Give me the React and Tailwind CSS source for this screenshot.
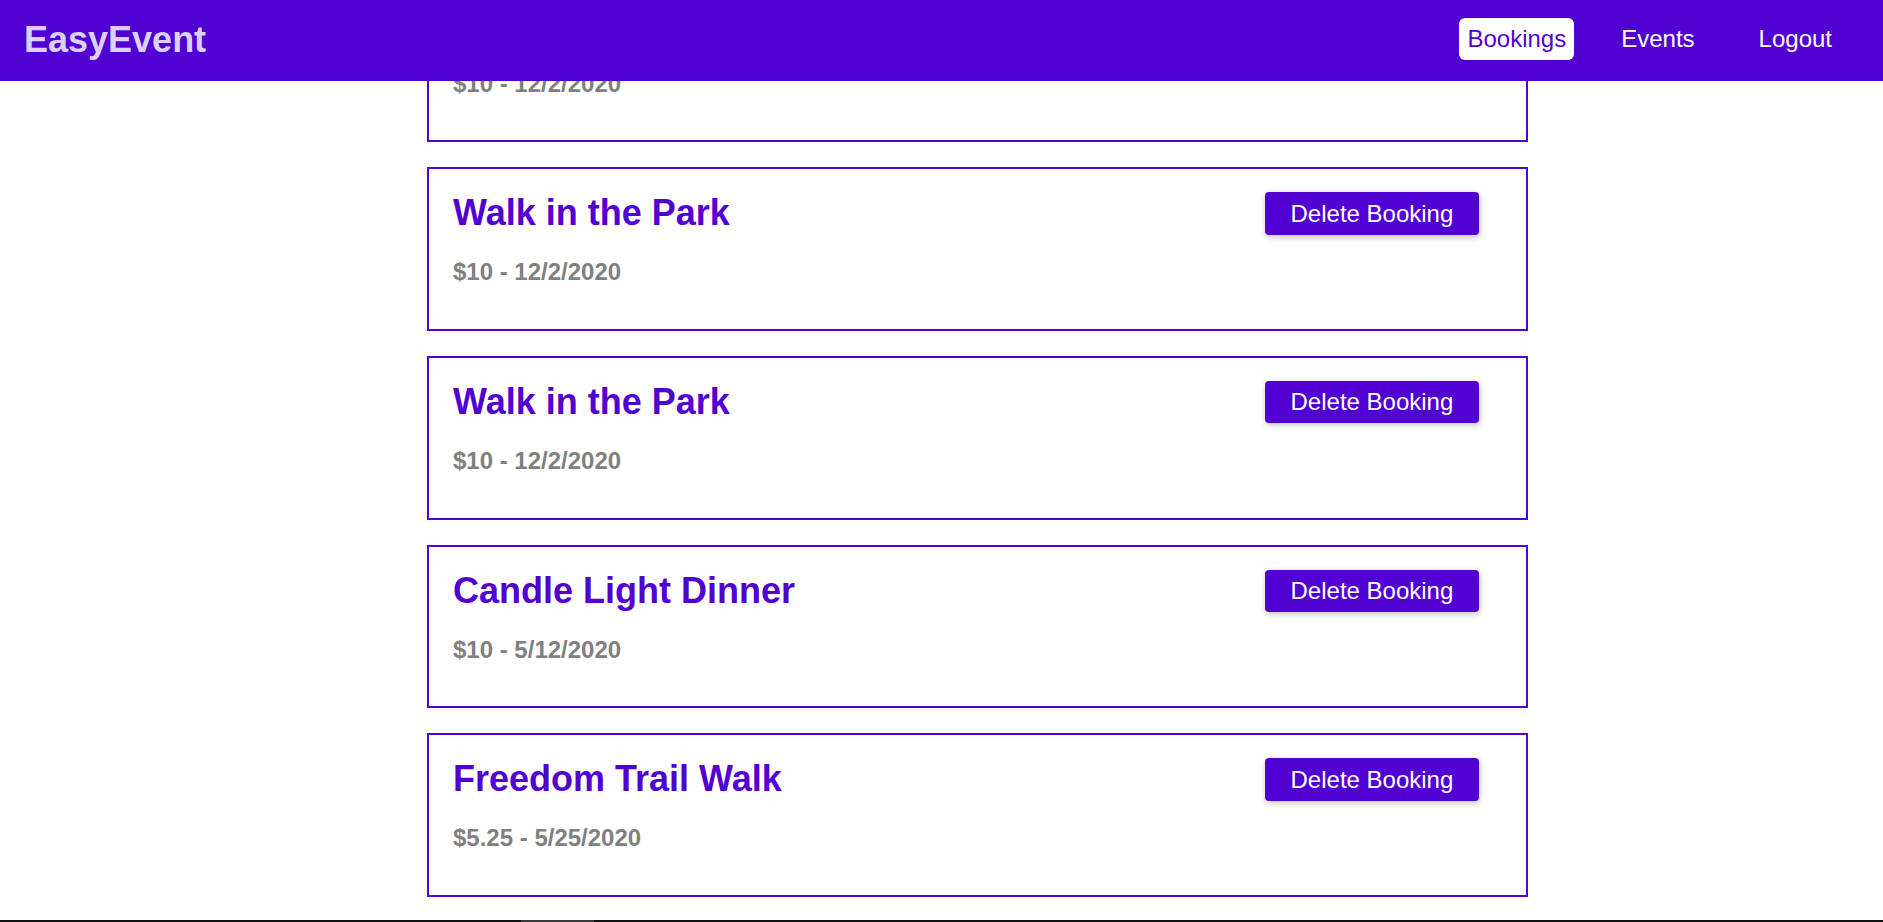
import React from "react";

const bookings = [
  { title: "Walk in the Park", sub: "$10 - 12/2/2020" },
  { title: "Walk in the Park", sub: "$10 - 12/2/2020" },
  { title: "Walk in the Park", sub: "$10 - 12/2/2020" },
  { title: "Candle Light Dinner", sub: "$10 - 5/12/2020" },
  { title: "Freedom Trail Walk", sub: "$5.25 - 5/25/2020" },
];

export default function App() {
  return (
    <div
      className="relative w-full h-[922px] overflow-hidden bg-white"
      style={{ fontFamily: '"Liberation Sans", Arial, sans-serif' }}
    >
      <header className="fixed top-0 left-0 right-0 z-10 h-[80.67px] bg-[#5101d1] flex items-center justify-between pl-[24px] pr-[43px]">
        <h1 className="text-[36px] leading-[1.15] font-bold text-[#dcd0ff] mb-[2px]">EasyEvent</h1>
        <nav className="self-start pt-[18px] flex items-center text-[24px] leading-[1.15]">
          <a className="px-[8px] py-[7px] rounded-[6px] bg-white text-[#5101d1]">Bookings</a>
          <a className="ml-[39px] px-[8px] py-[7px] text-white">Events</a>
          <button className="ml-[48px] px-[8px] py-[7px] text-white">Logout</button>
        </nav>
      </header>

      <main className="flex justify-center mt-[-21.5px]">
        <ul className="w-[1173px] pl-[72px] flex flex-col gap-[25px]">
          {bookings.map((b, i) => (
            <li
              key={i}
              className="border-2 border-[#5101d1] pt-[23px] pb-[43px] pl-[24px] pr-[24px] flex items-start justify-between"
            >
              <div>
                <h2 className="text-[36px] leading-[1.15] font-bold text-[#5101d1]">{b.title}</h2>
                <p className="mt-[24.7px] text-[24px] leading-[1.15] font-bold text-[#808080]">{b.sub}</p>
              </div>
              <button className="mr-[22.7px] px-[26px] py-[7.5px] text-[24px] leading-[1.15] text-white bg-[#5101d1] rounded-[4px] shadow-[1px_2px_6px_rgba(0,0,0,0.25)]">
                Delete Booking
              </button>
            </li>
          ))}
        </ul>
      </main>

      <div className="fixed bottom-0 left-0 right-0 h-[2px] bg-[#111111] flex">
        <div className="ml-[521px] w-[73px] bg-[#3a3a3a]" />
      </div>
    </div>
  );
}
